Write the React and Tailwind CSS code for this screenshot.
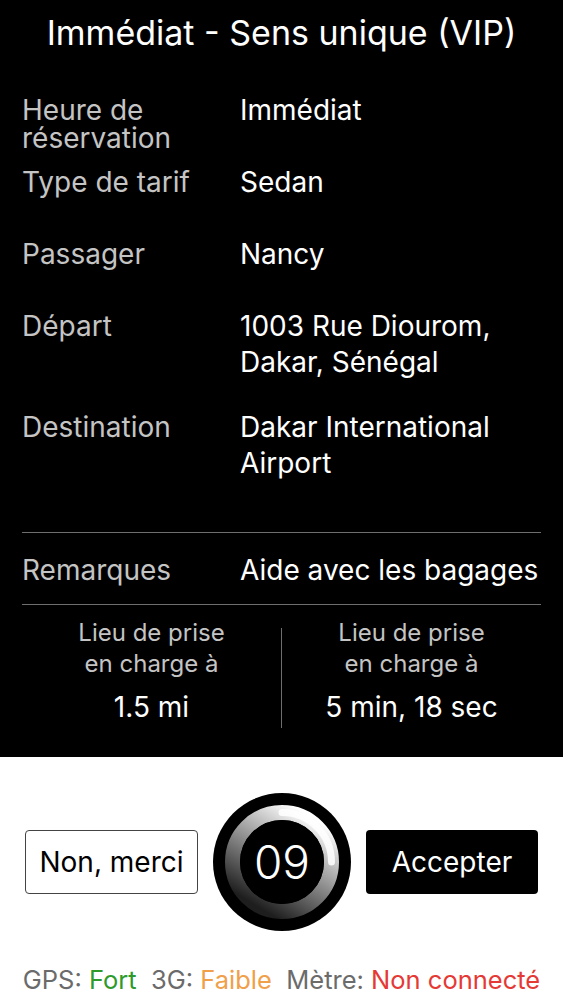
import React from "react";

const FONT = { fontFamily: "Inter, 'Noto Sans', sans-serif" };

function Row({ label, value, className = "" }) {
  return (
    <div className={`flex items-start ${className}`}>
      <div className="w-[218px] shrink-0 pt-[4px] text-[28px] leading-[28px] text-[#c4c4c4]">{label}</div>
      <div className="flex-1 text-[28px] leading-[36px] text-white whitespace-nowrap">{value}</div>
    </div>
  );
}

function Timer() {
  return (
    <svg width="140" height="140" viewBox="0 0 140 140" className="shrink-0">
      <defs>
        <linearGradient id="ringg" x1="0.8" y1="0.05" x2="0.25" y2="0.95">
          <stop offset="0" stopColor="#ffffff" />
          <stop offset="0.45" stopColor="#9a9a9a" />
          <stop offset="1" stopColor="#1e1e1e" />
        </linearGradient>
      </defs>
      <circle cx="70" cy="70" r="69" fill="#000" />
      <circle cx="70" cy="70" r="49.5" fill="none" stroke="url(#ringg)" strokeWidth="15" />
      <path d="M70 20.5 A49.5 49.5 0 0 1 119.5 70" fill="none" stroke="#fff" strokeWidth="7" strokeLinecap="round" opacity="0.85" />
      <circle cx="70" cy="70" r="42" fill="#000" />
      <text x="70" y="70" textAnchor="middle" dominantBaseline="central" fill="#fff" fontSize="46" fontFamily="Inter, sans-serif" fontWeight="300">09</text>
    </svg>
  );
}

export default function App() {
  return (
    <div className="w-[563px] h-[1000px] bg-white overflow-hidden" style={FONT}>
      <div className="bg-black h-[757px] px-[22px]">
        <div className="pt-[12px] text-center text-[34px] leading-[42px] text-white whitespace-nowrap">Immédiat - Sens unique (VIP)</div>
        <div className="mt-[38px] flex flex-col">
          <Row className="h-[36px]" label={<>Heure de<br />réservation</>} value="Immédiat" />
          <Row className="mt-[36px] h-[36px]" label="Type de tarif" value="Sedan" />
          <Row className="mt-[36px] h-[36px]" label="Passager" value="Nancy" />
          <Row className="mt-[36px] h-[72px]" label="Départ" value={<>1003 Rue Diourom,<br />Dakar, Sénégal</>} />
          <Row className="mt-[29px] h-[72px]" label="Destination" value={<>Dakar International<br />Airport</>} />
        </div>
        <div className="mt-[51px] h-px bg-[#6e6e6e]" />
        <Row className="mt-[19px] h-[36px]" label="Remarques" value="Aide avec les bagages" />
        <div className="mt-[16px] h-px bg-[#6e6e6e]" />
        <div className="flex pt-[12px]">
          <div className="flex-1 text-center">
            <div className="text-[24px] leading-[31px] text-[#c4c4c4]">Lieu de prise<br />en charge à</div>
            <div className="mt-[10px] text-[28px] leading-[36px] text-white">1.5 mi</div>
          </div>
          <div className="mt-[11px] w-px h-[100px] bg-[#6e6e6e]" />
          <div className="flex-1 text-center">
            <div className="text-[24px] leading-[31px] text-[#c4c4c4]">Lieu de prise<br />en charge à</div>
            <div className="mt-[10px] text-[28px] leading-[36px] text-white">5 min, 18 sec</div>
          </div>
        </div>
      </div>
      <div className="flex items-center justify-between px-[25px] mt-[35px]">
        <button className="w-[173px] h-[64px] rounded-[4px] border border-[#444] bg-white text-[28px] text-black">Non, merci</button>
        <Timer />
        <button className="w-[172px] h-[64px] rounded-[4px] bg-black text-[28px] text-white">Accepter</button>
      </div>
      <div className="mt-[32px] text-center text-[25.5px] leading-[32px] text-[#6b6b6b] whitespace-nowrap">
        GPS: <span className="text-[#2e9a2a]">Fort</span>&nbsp; 3G: <span className="text-[#f0a04a]">Faible</span>&nbsp; Mètre: <span className="text-[#e53935]">Non connecté</span>
      </div>
    </div>
  );
}
